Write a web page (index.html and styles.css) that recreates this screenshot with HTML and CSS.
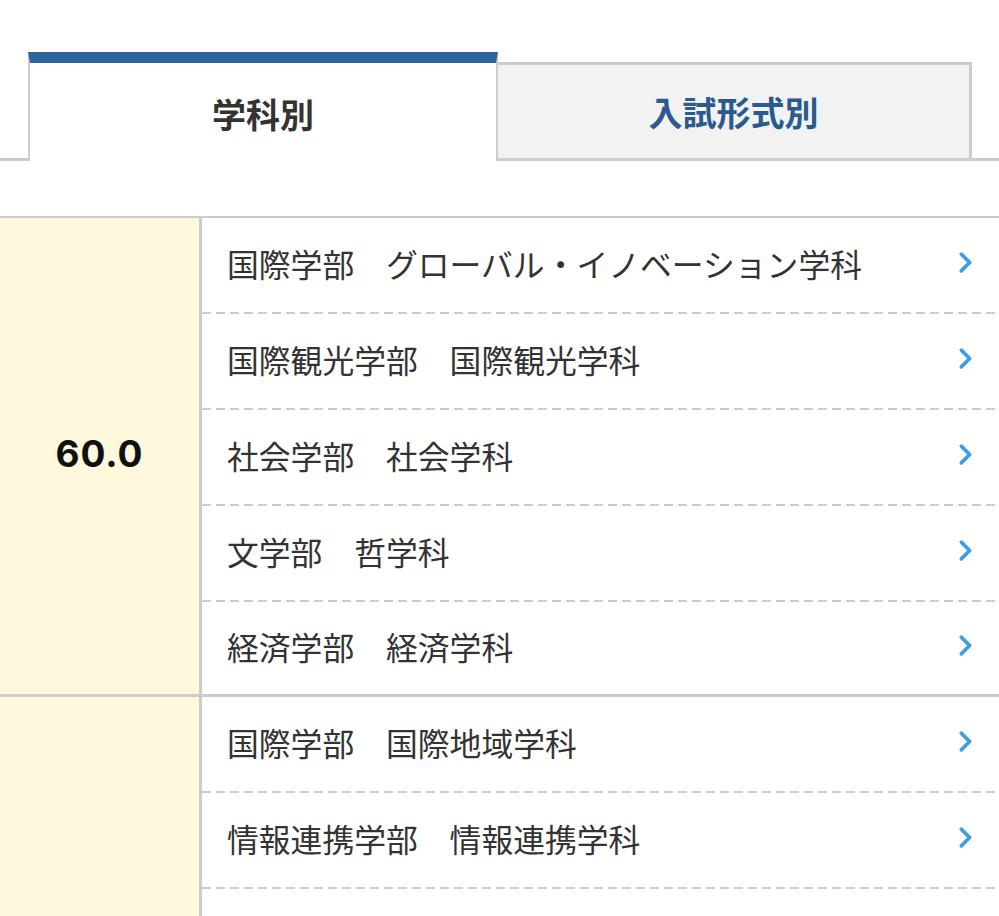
FILE: index.html
```html
<!DOCTYPE html>
<html lang="ja">
<head>
    <meta charset="UTF-8">
    <meta name="viewport" content="width=device-width, initial-scale=1.0">
    <title>偏差値一覧</title>
    <link rel="stylesheet" href="styles.css">
</head>
<body>
<div class="tabs">
    <a class="tab tab-active" href="#">学科別</a>
    <a class="tab" href="#">入試形式別</a>
</div>

<div class="ranking">
    <div class="group">
        <div class="score">60.0</div>
        <ul class="dept-list">
            <li><a href="#">国際学部　グローバル・イノベーション学科<svg class="chevron" viewBox="0 0 14 22"><polyline points="3,3 11,11 3,19"/></svg></a></li>
            <li><a href="#">国際観光学部　国際観光学科<svg class="chevron" viewBox="0 0 14 22"><polyline points="3,3 11,11 3,19"/></svg></a></li>
            <li><a href="#">社会学部　社会学科<svg class="chevron" viewBox="0 0 14 22"><polyline points="3,3 11,11 3,19"/></svg></a></li>
            <li><a href="#">文学部　哲学科<svg class="chevron" viewBox="0 0 14 22"><polyline points="3,3 11,11 3,19"/></svg></a></li>
            <li><a href="#">経済学部　経済学科<svg class="chevron" viewBox="0 0 14 22"><polyline points="3,3 11,11 3,19"/></svg></a></li>
        </ul>
    </div>
    <div class="group">
        <div class="score">57.5</div>
        <ul class="dept-list">
            <li><a href="#">国際学部　国際地域学科<svg class="chevron" viewBox="0 0 14 22"><polyline points="3,3 11,11 3,19"/></svg></a></li>
            <li><a href="#">情報連携学部　情報連携学科<svg class="chevron" viewBox="0 0 14 22"><polyline points="3,3 11,11 3,19"/></svg></a></li>
            <li><a href="#">文学部　日本文学文化学科<svg class="chevron" viewBox="0 0 14 22"><polyline points="3,3 11,11 3,19"/></svg></a></li>
            <li><a href="#">文学部　史学科<svg class="chevron" viewBox="0 0 14 22"><polyline points="3,3 11,11 3,19"/></svg></a></li>
            <li><a href="#">経営学部　経営学科<svg class="chevron" viewBox="0 0 14 22"><polyline points="3,3 11,11 3,19"/></svg></a></li>
            <li><a href="#">法学部　法律学科<svg class="chevron" viewBox="0 0 14 22"><polyline points="3,3 11,11 3,19"/></svg></a></li>
        </ul>
    </div>
</div>
</body>
</html>
```

FILE: styles.css
```css
:root {
    --border-color: #cccccc;
    --tab-blue: #2e64a2;
    --tab-text-blue: #2a5a8e;
    --score-bg: #fef9dc;
    --chevron-color: #3d9fe0;
    --text-color: #333;
}

body {
    margin: 0;
    padding: 0;
    background-color: #fff;
    color: var(--text-color);
    font-family: "Noto Sans CJK JP", "Noto Sans", sans-serif;
}

/* tabs */
.tabs {
    display: flex;
    align-items: flex-end;
    padding: 52px 0 0 28px;
    border-bottom: 3px solid var(--border-color);
}

.tab {
    display: flex;
    align-items: center;
    justify-content: center;
    box-sizing: border-box;
    text-decoration: none;
    font-size: 34px;
    font-weight: bold;
}

.tab-active {
    width: 470px;
    height: 109px;
    margin-bottom: -3px;
    padding-top: 2px;
    background-color: #fff;
    border: 2px solid var(--border-color);
    border-top: 11px solid var(--tab-blue);
    border-bottom: none;
    color: var(--text-color);
}

.tab:not(.tab-active) {
    width: 474px;
    height: 96px;
    padding-top: 0;
    background-color: #f2f2f2;
    border: 3px solid var(--border-color);
    border-left: none;
    border-bottom: none;
    color: var(--tab-text-blue);
}

/* ranking table */
.ranking {
    margin-top: 55px;
    border-top: 2px solid var(--border-color);
}

.group {
    display: grid;
    grid-template-columns: 202px 1fr;
    border-bottom: 3px solid var(--border-color);
}

.score {
    display: flex;
    align-items: center;
    justify-content: center;
    padding-bottom: 6px;
    background-color: var(--score-bg);
    border-right: 3px solid var(--border-color);
    font-family: Inter, "Noto Sans", sans-serif;
    font-size: 37px;
    font-weight: bold;
    letter-spacing: 1px;
    color: #111;
}

.dept-list {
    list-style: none;
    margin: 0;
    padding: 0;
}

.dept-list li {
    height: 96px;
    box-sizing: border-box;
    padding-bottom: 2px;
    background-image: repeating-linear-gradient(to right, var(--border-color) 0 9px, transparent 9px 14px);
    background-size: 100% 2px;
    background-position: left bottom;
    background-repeat: no-repeat;
}

.dept-list li:last-child {
    height: 92px;
    padding-bottom: 0;
    background-image: none;
}

.dept-list a {
    display: flex;
    align-items: center;
    justify-content: space-between;
    height: 100%;
    padding: 0 26px 5px 25px;
    box-sizing: border-box;
    color: var(--text-color);
    text-decoration: none;
    font-size: 31.8px;
}

.chevron {
    width: 15px;
    height: 23px;
    flex-shrink: 0;
}

.chevron polyline {
    fill: none;
    stroke: var(--chevron-color);
    stroke-width: 3.5;
    stroke-linecap: round;
    stroke-linejoin: round;
}
```
